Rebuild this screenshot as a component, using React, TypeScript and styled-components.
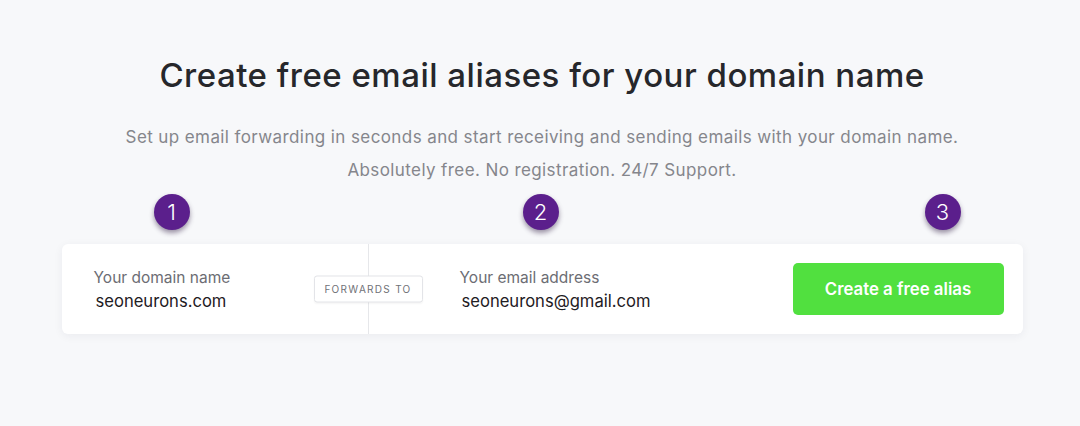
import React from "react";
import styled, { createGlobalStyle } from "styled-components";

const GlobalStyle = createGlobalStyle`
    body {
        margin: 0;
        background: #f7f8fa;
        font-family: Inter, "Noto Sans", sans-serif;
    }
`;

const steps = [
    { n: 1, offset: 92 },
    { n: 2, offset: 333 },
    { n: 3, offset: 366 },
];

const App = () => {
    return (
        <Page>
            <GlobalStyle />
            <Title>Create free email aliases for your domain name</Title>
            <Subtitle>
                Set up email forwarding in seconds and start receiving and sending emails with your domain name.
                <br />
                Absolutely free. No registration. 24/7 Support.
            </Subtitle>
            <Form onSubmit={(e) => e.preventDefault()}>
                <StepsRow>
                    {steps.map((s) => (
                        <StepBadge key={s.n} $offset={s.offset}>{s.n}</StepBadge>
                    ))}
                </StepsRow>
                <Card>
                    <DomainField>
                        <FieldLabel>Your domain name</FieldLabel>
                        <FieldValue>seoneurons.com</FieldValue>
                        <ForwardsTag>FORWARDS TO</ForwardsTag>
                    </DomainField>
                    <EmailField>
                        <FieldLabel>Your email address</FieldLabel>
                        <FieldValue>seoneurons@gmail.com</FieldValue>
                    </EmailField>
                    <CreateButton type="submit">Create a free alias</CreateButton>
                </Card>
            </Form>
        </Page>
    );
};

export default App;

const Page = styled.main`
    display: flex;
    flex-direction: column;
    align-items: center;
    height: 426px;
    padding: 55px 0 0 4px;
    box-sizing: border-box;
`;

const Title = styled.h1`
    margin: 0;
    font-size: 33px;
    line-height: 40px;
    font-weight: 500;
    color: #26272b;
    letter-spacing: 0.5px;
`;

const Subtitle = styled.p`
    margin: 26px 0 0;
    font-size: 17px;
    line-height: 33px;
    color: #85868c;
    text-align: center;
    letter-spacing: 0.4px;
`;

const Form = styled.form`
    width: 961px;
    margin-top: 7px;
`;

const StepsRow = styled.div`
    display: flex;
    height: 36px;
    margin-bottom: 14px;
`;

const StepBadge = styled.span<{ $offset: number }>`
    display: flex;
    align-items: center;
    justify-content: center;
    width: 36px;
    height: 36px;
    margin-left: ${(p) => p.$offset}px;
    border-radius: 50%;
    background: #5b1f8c;
    color: #fff;
    font-size: 22px;
    font-weight: 300;
    box-shadow: 0 3px 5px rgba(40, 20, 60, 0.45);
`;

const Card = styled.div`
    display: flex;
    align-items: center;
    height: 90px;
    background: #fff;
    border-radius: 6px;
    box-shadow: 0 2px 10px rgba(30, 40, 70, 0.06);
`;

const DomainField = styled.div`
    position: relative;
    display: flex;
    flex-direction: column;
    justify-content: center;
    width: 307px;
    height: 100%;
    padding: 2px 0 0 32px;
    box-sizing: border-box;
    border-right: 1px solid #e6e7ea;
`;

const EmailField = styled.div`
    display: flex;
    flex-direction: column;
    justify-content: center;
    flex: 1;
    padding: 2px 0 0 91px;
`;

const FieldLabel = styled.span`
    font-size: 15.5px;
    line-height: 22px;
    color: #6c6d73;
`;

const FieldValue = styled.span`
    font-size: 16.6px;
    line-height: 24px;
    color: #1f2024;
    padding-left: 2px;
`;

const ForwardsTag = styled.span`
    position: absolute;
    right: -55px;
    top: 50%;
    transform: translateY(-50%);
    width: 107px;
    height: 25px;
    line-height: 25px;
    text-align: center;
    background: #fff;
    border: 1px solid #e3e4e8;
    border-radius: 3px;
    font-size: 10px;
    letter-spacing: 1.3px;
    color: #707177;
    box-shadow: 0 1px 2px rgba(0, 0, 0, 0.04);
`;

const CreateButton = styled.button`
    width: 211px;
    height: 52px;
    margin-right: 19px;
    border: none;
    border-radius: 5px;
    background: #51e03f;
    color: #fff;
    font-family: Inter, "Noto Sans", sans-serif;
    font-size: 16.8px;
    font-weight: 600;
    cursor: pointer;
`;
